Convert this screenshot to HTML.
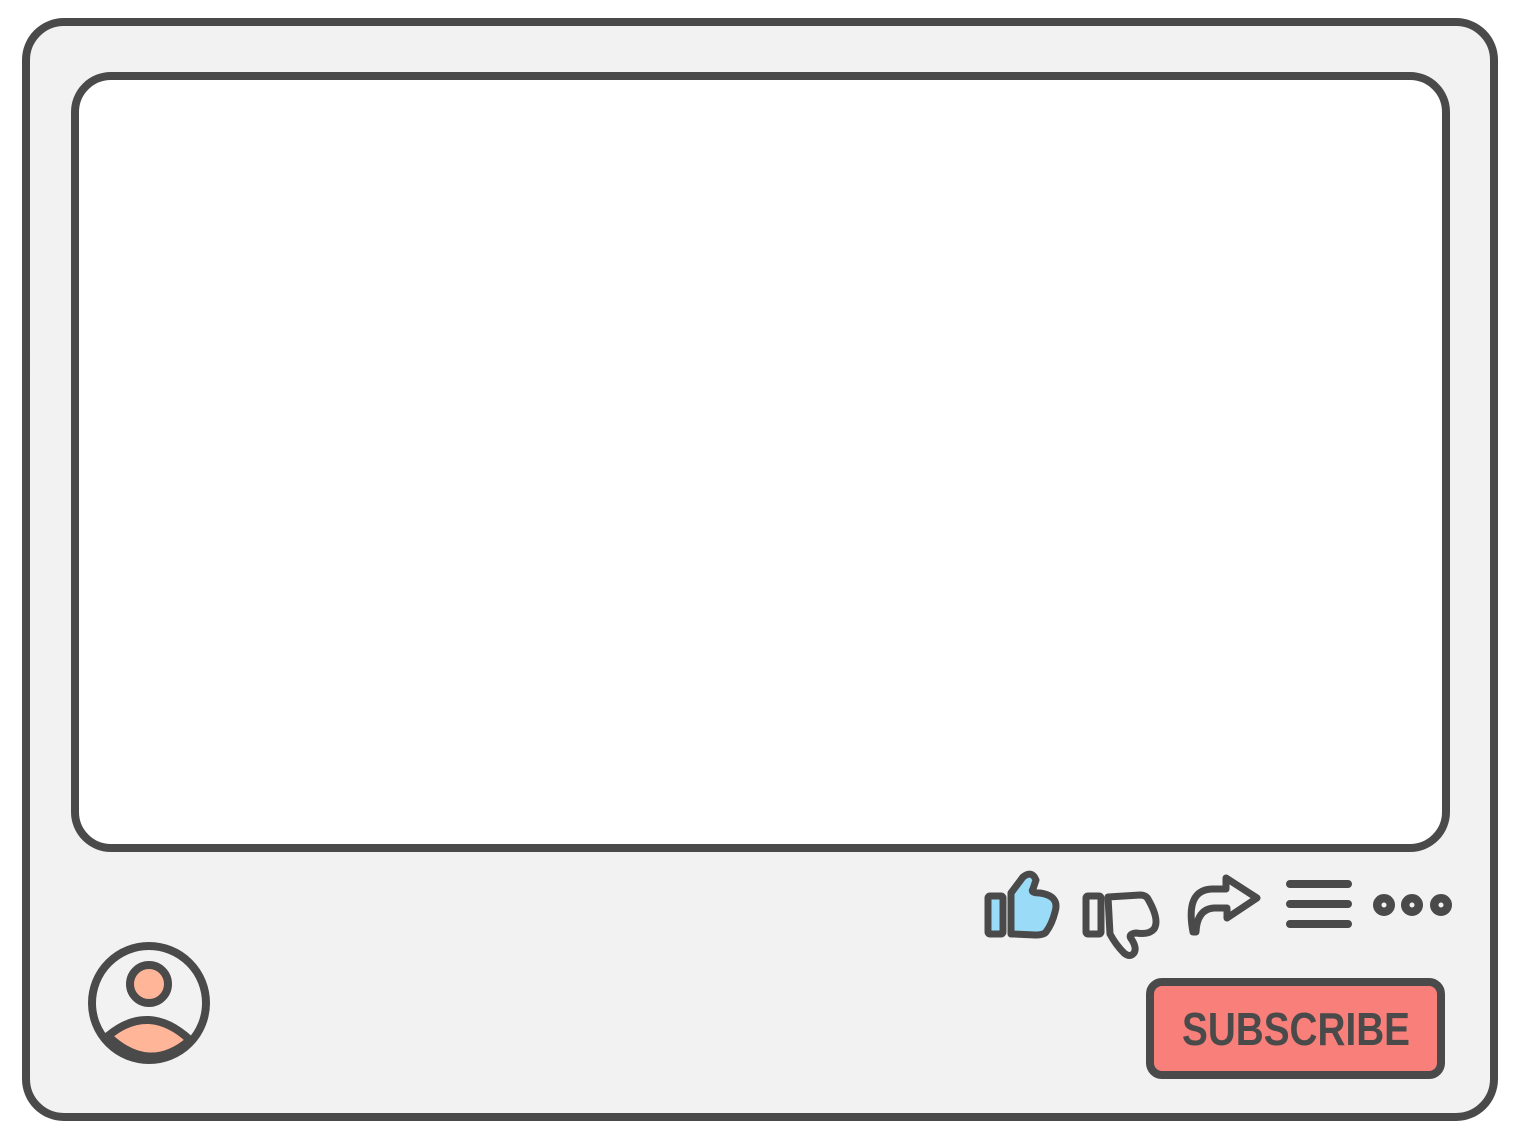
<!DOCTYPE html><html><head><style>html,body{margin:0;padding:0;background:#fff}svg{display:block}</style></head><body>
<svg width="1517" height="1135" viewBox="0 0 1517 1135" xmlns="http://www.w3.org/2000/svg">
<g stroke="#4a4a4a" stroke-width="8" stroke-linecap="round" stroke-linejoin="round">
<rect x="26" y="22" width="1468" height="1095" rx="38" fill="#f2f2f2"/>
<rect x="75" y="76" width="1371" height="772" rx="36" fill="#fff"/>
<rect x="1150" y="982" width="291" height="93" rx="12" fill="#f87f7a"/>
<circle cx="149" cy="1003" r="57" fill="#f2f2f2"/>
<circle cx="149" cy="984" r="19" fill="#ffb598"/>
<path d="M108 1036 Q149 1002 190 1040 Q149 1075 108 1036 Z" fill="#ffb598"/>
<rect x="988" y="896" width="15" height="38" rx="2" fill="#9adcf7" stroke-width="7"/>
<path d="M1011 934 L1011 893 L1023 877 Q1032 870 1036 880 L1033 889 Q1030 893 1040 893 Q1060 896 1055 912 Q1052 924 1046 932 Q1044 935 1035 935 L1014 934 Z" fill="#9adcf7" stroke-width="7"/>
<rect x="1086" y="896" width="15" height="38" rx="2" fill="#f2f2f2" stroke-width="7"/>
<path d="M1108 897 L1140 895 Q1146 895 1148 899 Q1160 920 1154 929 Q1149 935 1136 933 Q1127 934 1132 940 Q1137 948 1134 953 Q1130 958 1124 953 Q1116 945 1110 934 Z" fill="#f2f2f2" stroke-width="7"/>
<path d="M1193 932 Q1185 890 1212 889 L1226 889 L1226 878 L1257 898 L1227 918 L1227 908 L1214 908 Q1197 909 1196 932 Z" fill="#f2f2f2" stroke-width="7"/>
<path d="M1290 884 H1348 M1290 904 H1348 M1290 924 H1348"/>
<circle cx="1384" cy="905" r="8" fill="#4a4a4a" stroke-width="6"/>
<circle cx="1412" cy="905" r="8" fill="#4a4a4a" stroke-width="6"/>
<circle cx="1441" cy="905" r="8" fill="#4a4a4a" stroke-width="6"/>
</g>
<g fill="#f2f2f2"><circle cx="1384" cy="905" r="2.5"/><circle cx="1412" cy="905" r="2.5"/><circle cx="1441" cy="905" r="2.5"/></g>
<text x="1296" y="1045" text-anchor="middle" font-family="Liberation Sans Narrow, Liberation Sans, sans-serif" font-weight="bold" font-size="46" fill="#4a4a4a" textLength="228" lengthAdjust="spacingAndGlyphs">SUBSCRIBE</text>
</svg>
</body></html>
